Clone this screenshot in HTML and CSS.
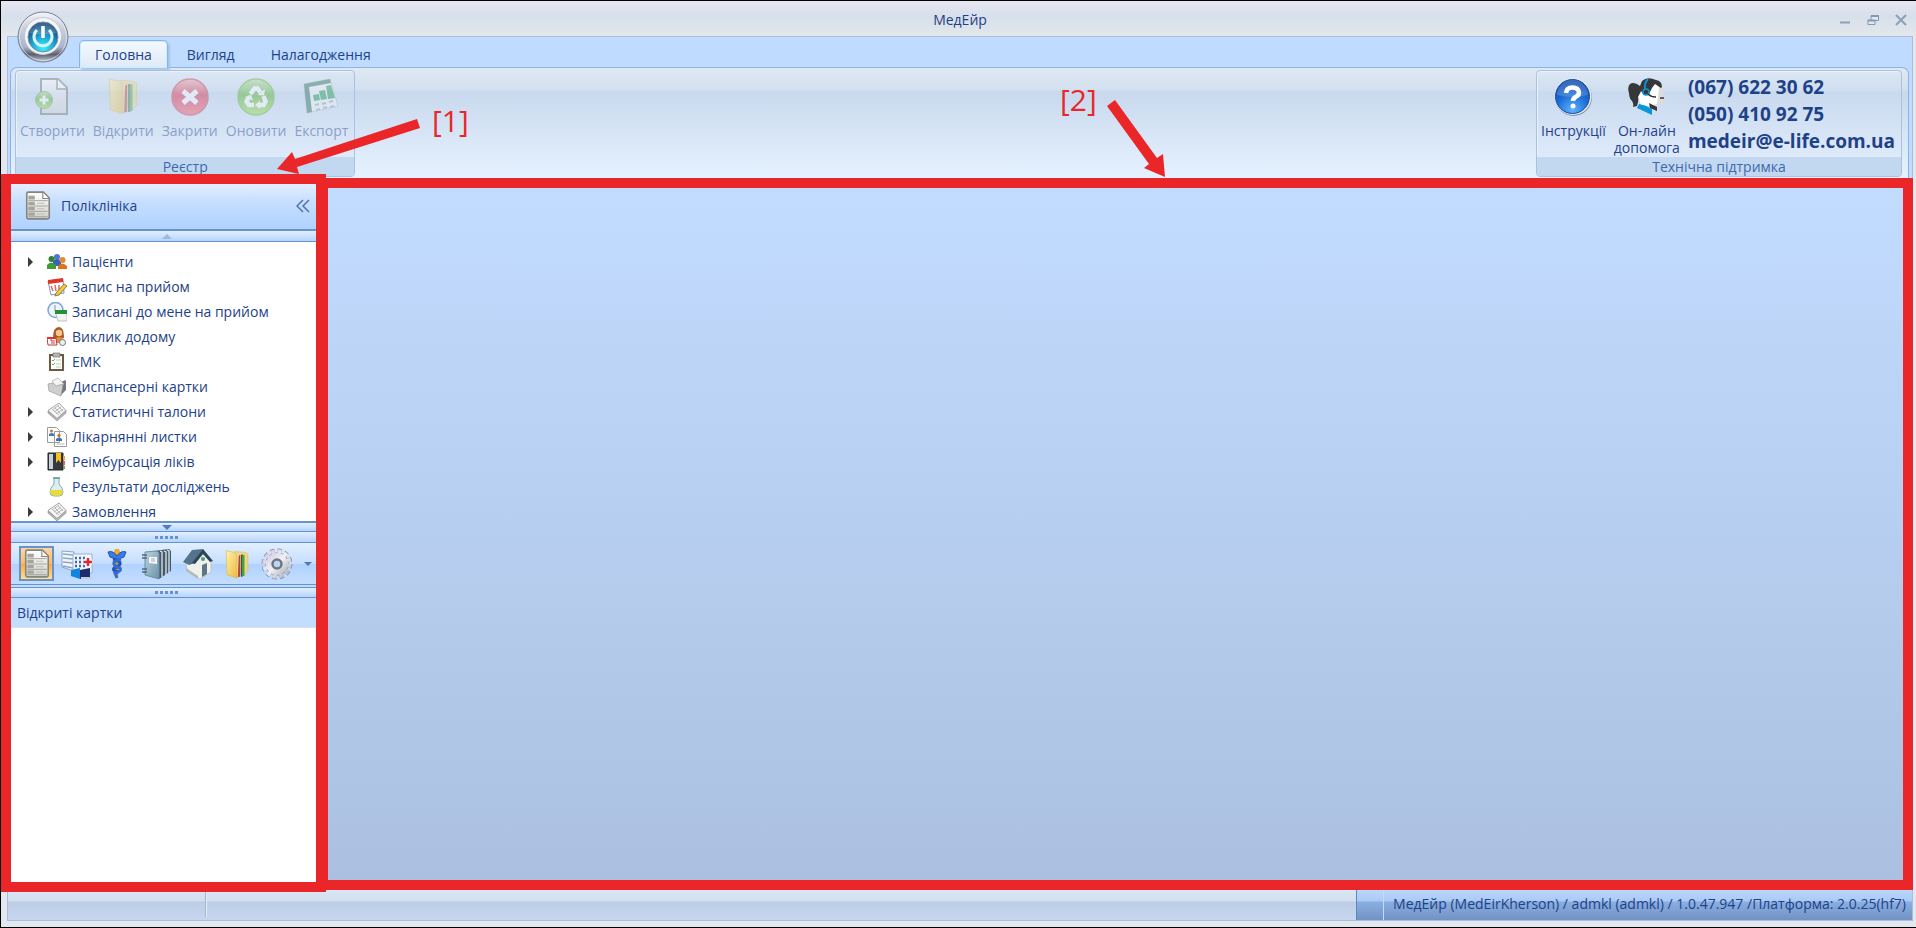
FILE: index.html
```html
<!DOCTYPE html>
<html lang="uk">
<head>
  <meta charset="UTF-8" />
  <meta name="viewport" content="width=device-width, initial-scale=1.0"/>
  <title>МедЕйр</title>
  <link rel="stylesheet" href="styles.css">
</head>
<body>
  <!-- shared gradients and icons used more than once -->
  <svg class="defs" width="0" height="0" aria-hidden="true">
    <defs>
      <linearGradient id="paper" x1="0" y1="0" x2="0" y2="1"><stop offset="0" stop-color="#fff"/><stop offset="1" stop-color="#cfcfcb"/></linearGradient>
      <linearGradient id="folder" x1="0" y1="0" x2="1" y2="1"><stop offset="0" stop-color="#fff3b0"/><stop offset="1" stop-color="#edb93c"/></linearGradient>
      <linearGradient id="steel" x1="0" y1="0" x2="0" y2="1"><stop offset="0" stop-color="#f4f6fa"/><stop offset=".3" stop-color="#ccd1de"/><stop offset=".7" stop-color="#a9b4cc"/><stop offset=".85" stop-color="#5b6070"/><stop offset="1" stop-color="#c9cedb"/></linearGradient>
      <linearGradient id="gear" x1="0" y1="0" x2="1" y2="1"><stop offset="0" stop-color="#d3c6e2"/><stop offset=".5" stop-color="#f1f1f6"/><stop offset="1" stop-color="#a9adb4"/></linearGradient>
      <linearGradient id="book" x1="0" y1="0" x2="1" y2="1"><stop offset="0" stop-color="#b9d3df"/><stop offset="1" stop-color="#6c93aa"/></linearGradient>
      <linearGradient id="red" x1="0" y1="0" x2="0" y2="1"><stop offset="0" stop-color="#f4a0ac"/><stop offset=".45" stop-color="#e0213c"/><stop offset="1" stop-color="#ff5368"/></linearGradient>
      <linearGradient id="green" x1="0" y1="0" x2="0" y2="1"><stop offset="0" stop-color="#b4dc9a"/><stop offset=".45" stop-color="#52b01e"/><stop offset="1" stop-color="#9be04a"/></linearGradient>
      <radialGradient id="blue" cx=".5" cy=".9" r=".8"><stop offset="0" stop-color="#5fb4ff"/><stop offset=".6" stop-color="#1b6cd6"/><stop offset="1" stop-color="#0e4dae"/></radialGradient>
      <radialGradient id="cyan" cx=".5" cy=".85" r=".75"><stop offset="0" stop-color="#35f4ff"/><stop offset=".5" stop-color="#1fa3d3"/><stop offset="1" stop-color="#0b4379"/></radialGradient>
    </defs>
    <symbol id="i-list" viewBox="0 0 24 28">
      <path d="M1.500 2.500q0-1.500 1.500-1.500h14l5.500 5.500v18q0 1.500-1.500 1.500H3q-1.500 0-1.500-1.500z" fill="url(#paper)" stroke="#85847d" stroke-width="1.500"/>
      <path d="M16.500 1.500v5.500h5.500" fill="#fff" stroke="#85847d"/>
      <path d="M3 4.500h6v3.500H3zM3 10h6v3H3zM3 15h6v3H3zM3 20h6v3H3z" fill="#a5a49d"/>
      <path d="M3 9h18M3 14h18M3 19h18M3 24h18" stroke="#9b9a93" stroke-width=".8"/>
      <path d="M11 11.500h7M11 16.500h7M11 21.500h7" stroke="#c0bfb8" stroke-width="1"/>
    </symbol>
    <symbol id="i-binder" viewBox="0 0 32 36">
      <path d="M13 3l13 1 3 2v21l-6 5z" fill="#f0d585" stroke="#d8b450" stroke-width=".6"/>
      <path d="M15 8l4-1v26l-4 1z" fill="#e6e0c8"/>
      <path d="M18 8l2-1v26l-3 1z" fill="#b9482c"/><path d="M21 7l2-.5v26l-2 1z" fill="#272f52"/><path d="M22 8l3-1v25l-3 1z" fill="#3fa63a"/>
      <path d="M3 2l9 2 4 4v27L4 31z" fill="url(#folder)" stroke="#e0b544" stroke-width=".7"/>
    </symbol>
    <symbol id="i-news" viewBox="0 0 20 20">
      <path d="M1 9v2l9 8 9-8V8l-9 8z" fill="#b9b9b9" stroke="#858585" stroke-width=".6"/>
      <path d="M1 8.500L12 1l7 7.500-9 8z" fill="#f7f7f7" stroke="#8d8d8d" stroke-width=".8"/>
      <path d="M5 8l7-5M7 10l7-5M9 12l7-5M8 6l6 6M6 8l6 5M11 4l5 5" stroke="#aaa" stroke-width=".8"/>
    </symbol>
  </svg>

  <div class="window">
    <header class="titlebar">
      <h1>МедЕйр</h1>
      <div class="window-buttons">
        <button type="button" aria-label="Згорнути"><svg width="12" height="12" viewBox="0 0 12 12"><path d="M1 8.500h10" stroke="#8e9fb8" stroke-width="2"/></svg></button>
        <button type="button" aria-label="Відновити"><svg width="12" height="12" viewBox="0 0 12 12"><path d="M4 1.500h7.500v5H4zM1 6.500h7v4H1z" fill="#e2e7ee" stroke="#8598b5"/><path d="M4 2h8M.5 6.500h8" stroke="#8598b5" stroke-width="2"/></svg></button>
        <button type="button" aria-label="Закрити вікно"><svg width="12" height="12" viewBox="0 0 12 12"><path d="M1 1l10 10M11 1L1 11" stroke="#8e9fb8" stroke-width="2"/></svg></button>
      </div>
    </header>

    <div class="frame">
      <button type="button" class="orb" aria-label="Меню">
        <svg width="52" height="52" viewBox="0 0 52 52">
          <circle cx="26" cy="26" r="25" fill="url(#steel)" stroke="#7b8190"/>
          <circle cx="26" cy="26" r="23.500" fill="none" stroke="#eef1f6" opacity=".6"/>
          <circle cx="26" cy="25" r="18.500" fill="#f3f5f8" stroke="#c3c8d2"/>
          <circle cx="26" cy="26" r="15" fill="url(#cyan)" stroke="#7d8c9b"/>
          <path d="M20 19a9 9 0 1 0 12 0" fill="none" stroke="#d9f3fa" stroke-width="3"/>
          <path d="M26 15v12" stroke="#fff" stroke-width="3.500"/>
          <path d="M12.500 22a14 14 0 0 1 27 0q-13 3-27 0z" fill="#fff" opacity=".2"/>
        </svg>
      </button>

      <nav class="tabs">
        <a href="#home" class="tab active">Головна</a>
        <a href="#view" class="tab">Вигляд</a>
        <a href="#setup" class="tab">Налагодження</a>
      </nav>

      <section class="ribbon" id="home">
        <div class="group">
          <div class="group-body">
            <button type="button" class="tool" disabled>
              <svg width="40" height="40" viewBox="0 0 40 40"><path d="M9 2h17l9 9v26H9z" fill="url(#paper)" stroke="#6f736f" stroke-width="2"/><path d="M25 2v10h10" fill="#fff" stroke="#6f736f" stroke-width="1.500"/><circle cx="12" cy="23" r="8.500" fill="url(#green)" stroke="#6da84c"/><path d="M12 18.500v9M7.500 23h9" stroke="#fff" stroke-width="3"/></svg>
              <span>Створити</span>
            </button>
            <button type="button" class="tool" disabled>
              <svg width="40" height="40" viewBox="-3 0 38 38"><use href="#i-binder" width="32" height="36"/></svg>
              <span>Відкрити</span>
            </button>
            <button type="button" class="tool" disabled>
              <svg width="40" height="40" viewBox="0 0 40 40"><circle cx="20" cy="20" r="18" fill="url(#red)" stroke="#c23a4b" stroke-width="1.500"/><path d="M13 14l14 12M27 14L13 26" stroke="#fff" stroke-width="5"/></svg>
              <span>Закрити</span>
            </button>
            <button type="button" class="tool" disabled>
              <svg width="40" height="40" viewBox="0 0 40 40"><circle cx="20" cy="20" r="18" fill="url(#green)" stroke="#69b039" stroke-width="1.500"/><g fill="none" stroke="#fff" stroke-width="4.500"><path d="M14.500 17l4-5.500h3l3 4"/><path d="M27.500 19l2 5.500-2 3.500h-5"/><path d="M18 28h-5l-2.500-3.500 2-4"/></g><path d="M21.500 18l6.500.5 1-6.500zM24 23.500V32l-5-4zM9 20l6-2.500 2 6z" fill="#fff"/></svg>
              <span>Оновити</span>
            </button>
            <button type="button" class="tool" disabled>
              <svg width="40" height="40" viewBox="0 0 40 40"><path d="M3 7l26-5 8 27-31 7z" fill="#f3f4f3" stroke="#b4bbc0"/><path d="M3 7l26-5 1 4-22 4 3 25-5 1z" fill="#276b51"/><path d="M12 18l6-1 1 6-6 1zM18 14l6-1 2 9-6 1zM25 9l5-1 4 13-7 1z" fill="#19974a"/><path d="M14 28l4-1M21 27l4-1M28 25l4-1M15 33l4-1M22 31l4-1M29 30l4-1" stroke="#9aa1a8" stroke-width="2"/></svg>
              <span>Експорт</span>
            </button>
          </div>
          <div class="group-title">Реєстр</div>
        </div>

        <div class="group support">
          <div class="group-body">
            <button type="button" class="tool">
              <svg width="40" height="40" viewBox="0 0 40 40"><circle cx="20.500" cy="20.500" r="18.500" fill="#8592a6"/><circle cx="20" cy="19.500" r="18.500" fill="#e3edf8"/><circle cx="19.500" cy="19.500" r="17" fill="url(#blue)" stroke="#1a4e9f"/><path d="M4 18a15.500 15 0 0 1 31 0q-15 4-31 0z" fill="#fff" opacity=".18"/><path d="M13 16q.5-5.500 6.500-5.500t6.500 5q0 3-3.500 4.500-2.500 1.500-2.500 4" fill="none" stroke="#fff" stroke-width="4.500"/><circle cx="20" cy="29" r="2.500" fill="#fff"/></svg>
              <span>Інструкції</span>
            </button>
            <button type="button" class="tool">
              <svg width="40" height="40" viewBox="0 0 40 40"><path d="M27 5l7 2 3 7-1 2 2 6-2 1v5l-6 1-3-6z" fill="#dcdcdc"/><path d="M22 7l8-1 2 6-1 8-1 7-3 1-12 3-4-12z" fill="#fff"/><path d="M13 9Q7 4 3 7q-3 3-1 9 0 5 3 8 2 3 1 6l4-1q2-6 1-9l3-6 3 4 5-1 3-6 3-4 6 4 1-1Q35 4 29 3 20-1 15 4z" fill="#363738"/><path d="M21 2q-4 4-3 11" fill="none" stroke="#0a96d8" stroke-width="1.800"/><circle cx="19" cy="15" r="3" fill="#363738" stroke="#0a96d8" stroke-width="1.500"/><path d="M21 17q3 3 8 3M33 21h4" fill="none" stroke="#333" stroke-width="1.500"/><path d="M22 26l8 4v4l-7-3z" fill="#363738"/><path d="M12 27q7 1 13 5v6L10 31z" fill="#0a96d8"/></svg>
              <span>Он-лайн<br>допомога</span>
            </button>
            <address class="contacts">
              <span>(067) 622 30 62</span>
              <span>(050) 410 92 75</span>
              <span>medeir@e-life.com.ua</span>
            </address>
          </div>
          <div class="group-title">Технічна підтримка</div>
        </div>
      </section>

      <div class="workspace">
        <aside class="sidebar">
          <div class="panel-head">
            <svg width="26" height="30"><use href="#i-list"/></svg>
            <h2>Поліклініка</h2>
            <button type="button" aria-label="Згорнути панель"><svg width="14" height="14" viewBox="0 0 14 14"><path d="M7 1L1 7l6 6M13 1L7 7l6 6" fill="none" stroke="#4e74ad" stroke-width="1.500"/></svg></button>
          </div>
          <button type="button" class="scroll up" aria-label="Вгору"><svg width="10" height="5"><path d="M0 5l5-5 5 5z" fill="#9db9df"/></svg></button>

          <ul class="tree">
            <li class="parent"><svg width="20" height="20" viewBox="0 0 20 20"><circle cx="10" cy="5" r="3" fill="#4d78cf"/><path d="M6 14V9q4-4 8 0v5z" fill="#3263bd"/><circle cx="4.500" cy="7" r="3" fill="#377f37"/><path d="M0 17v-4q4-5 9 0v4z" fill="#3d9c35"/><circle cx="15.500" cy="8" r="3" fill="#e08a32"/><path d="M11 17v-3q4-5 9 0v3z" fill="#e2711e"/></svg><a href="#p1">Пацієнти</a></li>
            <li><svg width="20" height="20" viewBox="0 0 20 20"><path d="M1 4l15-2 1 14-13 2z" fill="#fff" stroke="#7d96c2"/><path d="M1 3l15-2v4L1 7z" fill="#e23526"/><path d="M4 9l2 5M8 8l1 6M12 8v5" stroke="#d56b60" stroke-width="1.500"/><path d="M9 16l8-9 3 2-8 9-4 1z" fill="#f1c93f" stroke="#78652c" stroke-width=".8"/></svg><a href="#p2">Запис на прийом</a></li>
            <li><svg width="20" height="20" viewBox="0 0 20 20"><circle cx="8.500" cy="8" r="7.500" fill="#edf5fd" stroke="#77a9d5" stroke-width="1.500"/><path d="M8 3v6h4" fill="none" stroke="#8896a5"/><path d="M8 9h12v10H11z" fill="#f3f3f3" stroke="#aaa" stroke-width=".7"/><path d="M8 8h12v4H8z" fill="#259133"/></svg><a href="#p3">Записані до мене на прийом</a></li>
            <li><svg width="20" height="20" viewBox="0 0 20 20"><path d="M6 11q0-11 6-11 5 0 5 11z" fill="#aa5a24"/><circle cx="12" cy="6" r="3.200" fill="#f6c693"/><path d="M7 16q0-6 5-6t6 6z" fill="#d9923f"/><path d="M0 11h9l1 7H1z" fill="#fff" stroke="#ba3a31"/><path d="M0 10h9v2H0z" fill="#df3429"/><path d="M3 13h2v4M7 13v4" stroke="#d33" fill="none"/><circle cx="15.500" cy="15.500" r="3" fill="#eee" stroke="#777"/></svg><a href="#p4">Виклик додому</a></li>
            <li><svg width="20" height="20" viewBox="0 0 20 20"><path d="M3 3h13v15H3z" fill="#fff" stroke="#6b5943" stroke-width="2"/><path d="M6 1h7v4H6z" fill="#b6b6b2" stroke="#666" stroke-width=".6"/><path d="M5 8l1 1 2-2M5 12l1 1 2-2" stroke="#6da55a" fill="none"/><path d="M9 8h5M9 12h5M9 15h5" stroke="#b7d1ad"/></svg><a href="#p5">ЕМК</a></li>
            <li><svg width="20" height="20" viewBox="0 0 20 20"><path d="M8 9l10-6 1 1v9l-6 6z" fill="#777"/><path d="M5 4l6-3 6 6-7 4z" fill="#f4f4f4" stroke="#aaa" stroke-width=".7"/><path d="M1 7l5-1 3 3 7-2-2 12L2 14z" fill="#cfcfcf" stroke="#9b9b9b" stroke-width=".7"/></svg><a href="#p6">Диспансерні картки</a></li>
            <li class="parent"><svg width="20" height="20"><use href="#i-news"/></svg><a href="#p7">Статистичні талони</a></li>
            <li class="parent"><svg width="20" height="20" viewBox="0 0 20 20"><path d="M.5.500h9l3 3v12H.5zM7.500 4.500h9l3 3v12h-12z" fill="#fff" stroke="#9b9b97"/><circle cx="4.500" cy="4" r="1.500" fill="#c17b37"/><path d="M2 9V7q3-2 5 0v2z" fill="#4978b1"/><circle cx="12" cy="8.500" r="1.700" fill="#c17b37"/><path d="M9 14v-2q3-3 6 0v2z" fill="#3e72b0"/><path d="M9.500 17h8" stroke="#bbb"/></svg><a href="#p8">Лікарнянні листки</a></li>
            <li class="parent"><svg width="20" height="20" viewBox="0 0 20 20"><path d="M1 1h15v17H1z" fill="#35383e" stroke="#25282d"/><path d="M2 2h4v15H2z" fill="#c7d1dc"/><path d="M9 1h5v10l-2.500-3L9 11z" fill="#f2c221"/><path d="M16 4h2v4h-2z" fill="#e8aa44"/><path d="M16 9h2v4h-2z" fill="#d35f70"/><path d="M16 14h2v3h-2z" fill="#69a95a"/></svg><a href="#p9">Реімбурсація ліків</a></li>
            <li><svg width="20" height="20" viewBox="0 0 20 20"><path d="M7 1h5v6q4 4 4 8t-4 4H7q-4 0-4-4t4-8z" fill="#dceef0" stroke="#84acb5"/><path d="M3.500 13h12q1 5-3 5.500h-6Q2.500 18 3.500 13z" fill="#eadc36"/><path d="M6 1h7" stroke="#6994a1" stroke-width="1.500"/></svg><a href="#p10">Результати досліджень</a></li>
            <li class="parent"><svg width="20" height="20"><use href="#i-news"/></svg><a href="#p11">Замовлення</a></li>
          </ul>

          <button type="button" class="scroll down" aria-label="Вниз"><svg width="10" height="5"><path d="M0 0h10L5 5z" fill="#4f7dbd"/></svg></button>
          <div class="splitter"></div>

          <div class="modules">
            <button type="button" class="selected" aria-label="Поліклініка"><svg width="26" height="30"><use href="#i-list"/></svg></button>
            <button type="button" aria-label="Стаціонар"><svg width="32" height="32" viewBox="0 0 32 32"><path d="M1 3l12 1v19L1 19z" fill="#f2f5fa" stroke="#8fa3c1"/><path d="M2 6l10 1M2 10l10 1M2 14l10 1M2 18l10 2" stroke="#8fa5cb" stroke-width="1.500"/><path d="M12 6h19v19H12z" fill="#f1f5fc" stroke="#9cafce"/><path d="M14 10h12M14 14h12M14 18h12" stroke="#3f66b2" stroke-width="2.500" stroke-dasharray="2 2"/><circle cx="27" cy="14" r="4.500" fill="#fff"/><path d="M27 10v8M23 14h8" stroke="#df2937" stroke-width="2.500"/><path d="M10 22l9-2v11l-9-3z" fill="#1183e1"/><path d="M19 22l10-2v9l-10 2z" fill="#1c2d6e"/><path d="M20 30h11" stroke="#c5ccd9" stroke-width="2"/></svg></button>
            <button type="button" aria-label="Лікарі"><svg width="32" height="32" viewBox="0 0 32 32"><path d="M14 1h4l-1 29h-2z" fill="#d98e20"/><circle cx="16" cy="4" r="3" fill="#f1ae2b"/><path d="M7 4q5-2 9 4 4-6 9-4l-2 5-5 2h-4L9 9z" fill="#367bea" stroke="#2254b8"/><path d="M12 11q8 2 7 5t-6 4q-2 3 5 4" fill="none" stroke="#2054ba" stroke-width="3"/><path d="M20 11q-8 2-7 5t6 4q2 3-5 5l2 5" fill="none" stroke="#306bda" stroke-width="3"/></svg></button>
            <button type="button" aria-label="Журнали"><svg width="32" height="32" viewBox="0 0 32 32"><path d="M13 3l15-2 2 2v20L18 31z" fill="#45596a"/><path d="M19 3l2 1v25M23 3l2 1v23M26 2l2 1v22" stroke="#dfe8ec" stroke-width="1.300" fill="none"/><path d="M4 4l12-1 2 2v26L4 27z" fill="url(#book)" stroke="#6d8fa3"/><path d="M8 9h8v7l-8-1z" fill="#f4f8f8"/><path d="M10 11h4M10 13h4" stroke="#aaa"/><path d="M1 7h5M1 10h5M1 21h5M1 24h5" stroke="#59666f" stroke-width="1.500"/></svg></button>
            <button type="button" aria-label="Домашня"><svg width="32" height="32" viewBox="0 0 32 32"><path d="M5 15l9-3 9-6 7 8v10l-11 7-13-9z" fill="#f0f0ec" stroke="#b6b9bb" stroke-width=".7"/><path d="M5 20l12 8v3L5 23z" fill="#b4b9ba"/><path d="M2 14L11 2l11-1-8 14-6 2z" fill="#54748d"/><path d="M22 1l10 12-3 1-7-8-8 10-3-1z" fill="#2f4555"/><path d="M21 17l5-2v11l-5 3z" fill="#5c7686"/><circle cx="22" cy="11" r="2" fill="#3f9a87"/></svg></button>
            <button type="button" aria-label="Документи"><svg width="28" height="30"><use href="#i-binder"/></svg></button>
            <button type="button" aria-label="Налаштування"><svg width="32" height="32" viewBox="0 0 32 32"><circle cx="16" cy="16" r="12.500" fill="none" stroke="#858a95" stroke-width="6" stroke-dasharray="3.800 2.745"/><circle cx="16" cy="16" r="11.500" fill="#858a95"/><circle cx="16" cy="16" r="12.500" fill="none" stroke="url(#gear)" stroke-width="4.500" stroke-dasharray="3.800 2.745"/><circle cx="16" cy="16" r="11" fill="url(#gear)"/><circle cx="16" cy="16" r="4.500" fill="#bdd5f5" stroke="#6d7584" stroke-width="2.500"/></svg></button>
            <button type="button" class="more" aria-label="Більше"><svg width="8" height="4"><path d="M0 0h8L4 4z" fill="#4d77b5"/></svg></button>
          </div>
          <div class="splitter lower"></div>
          <h2 class="cards-head">Відкриті картки</h2>
          <div class="cards"></div>
        </aside>
        <main class="content"></main>
      </div>

      <footer class="statusbar">
        <span class="cell"></span>
        <span class="info">МедЕйр (MedEirKherson) / admkl (admkl) / 1.0.47.947 /Платформа: 2.0.25(hf7)</span>
      </footer>
    </div>
  </div>

  <div class="note note-1">
    <svg width="144" height="58" viewBox="0 0 144 58"><path d="M140 3l3 9-123 39 2 7-22-5 15-17 3 7z" fill="#ea2629"/></svg>
    <span>[1]</span>
  </div>
  <div class="note note-2">
    <span>[2]</span>
    <svg width="60" height="78" viewBox="0 0 60 78"><path d="M1 6l8-6 42 58 6-4 2 23-21-9 5-4z" fill="#ea2629"/></svg>
  </div>
</body>
</html>
```

FILE: styles.css
```css
* { box-sizing: border-box; }
body { margin: 0; font-family: "Open Sans", "Noto Sans", sans-serif; font-size: 14px; line-height: 20px; color: #1e4287; }
h1, h2 { margin: 0; font-size: inherit; font-weight: normal; }
button { margin: 0; padding: 0; border: 0; background: none; font: inherit; color: inherit; }
a { color: inherit; text-decoration: none; }
svg { display: block; flex: none; }
.defs { position: absolute; }

.window { display: flex; flex-direction: column; min-height: 100vh; padding: 0 3px 6px 6px; background: #e3e7ef; border: 1px solid #000; border-right: 0; }
.titlebar { position: relative; display: flex; align-items: center; justify-content: center; height: 35px; margin: 0 -3px 0 -6px; padding: 3px 0 0 3px; background: linear-gradient(#e6e6f3, #d7e0ea 45%, #e3e7ec); }
.window-buttons { position: absolute; right: 9px; top: 13px; display: flex; gap: 16px; }

.frame { position: relative; flex: 1; display: flex; flex-direction: column; border: 1px solid #adbdd3; background: #bfdbff; }
.orb { position: absolute; left: 9px; top: -26px; }
.tabs { display: flex; height: 30px; padding: 3px 0 0 71px; }
.tab { height: 27px; padding: 4px 16px 0; margin-right: 2px; border: 1px solid transparent; }
.tab.active { position: relative; height: 28px; padding: 4px 15px 0; border: 1px solid #8db2e3; border-bottom: 0; border-radius: 5px 5px 0 0; background: linear-gradient(#f3f8fe, #dfeaf6); box-shadow: 2px 2px 2px #a5c3e8, inset 0 0 0 1px #c5f0ff; }

/* ribbon */
.ribbon { display: flex; justify-content: space-between; height: 111px; margin: 0 3px 0 2px; padding: 2px 6px 1px 4px; border: 1px solid #8db2e3; border-bottom: 0; border-radius: 7px 7px 0 0; background: linear-gradient(#dfe9f4, #d3e0ef 22px, #c8d8ed 23px, #e6f2ff); }
.group { display: flex; flex-direction: column; border: 1px solid #a9c2df; border-radius: 4px; background: linear-gradient(#dce7f4, #cfdef0 20px, #c9d9ee 21px, #dfebfb 88px); box-shadow: inset 1px 1px #e9f1fa; overflow: hidden; }
.group-body { flex: 1; display: flex; gap: 8px; padding: 6px 6px 0 4px; }
.group-title { height: 19px; line-height: 20px; text-align: center; background: #c1d8f0; color: #3f69ab; }
.tool { display: flex; flex-direction: column; align-items: center; line-height: 17px; }
.tool svg { margin-bottom: 5px; }
.tool:disabled { opacity: .42; }
.contacts { display: flex; flex-direction: column; margin-top: -3px; font-style: normal; font-weight: bold; font-size: 19px; line-height: 27px; }

/* side panel */
.workspace { flex: 1; display: flex; }
.sidebar { position: relative; z-index: 1; display: flex; flex-direction: column; width: 318px; padding: 6px 4px 0 3px; }
.sidebar::after, .content::after { content: ""; position: absolute; border: 10px solid #ea2629; pointer-events: none; }
.sidebar::after { inset: -4px 0 -2px -7px; }
.panel-head { display: flex; align-items: center; gap: 10px; height: 47px; padding: 0 12px 2px 14px; border-bottom: 2px solid #6593cf; background: linear-gradient(#e3efff, #c6deff 40%, #afd2ff); }
.panel-head h2 { flex: 1; }
.scroll { display: flex; align-items: center; justify-content: center; height: 11px; background: linear-gradient(#e3efff, #b5d4fd); border-bottom: 1px solid #6593cf; }
.scroll.down { border-top: 2px solid #6593cf; }
.tree { margin: 0; padding: 7px 0 0; list-style: none; height: 279px; background: #fff; overflow: hidden; }
.tree li { display: flex; align-items: center; gap: 5px; height: 25px; padding-left: 36px; }
.tree .parent::before { content: ""; width: 0; margin: 0 9px 0 -19px; border: solid transparent; border-width: 5px 0 5px 5px; border-left-color: #3b3b3b; }
.splitter { display: flex; align-items: center; justify-content: center; height: 11px; border-bottom: 1px solid #6593cf; background: linear-gradient(#e3efff, #b5d4fd); }
.splitter::before { content: ""; width: 24px; height: 3px; background: repeating-linear-gradient(90deg, #6593cf 0 3px, transparent 3px 5px); }
.splitter.lower { margin-top: 2px; border-top: 1px solid #6593cf; }
.modules { display: flex; align-items: center; gap: 5px; height: 42px; padding: 0 6px 0 8px; border-bottom: 1px solid #6593cf; background: linear-gradient(#e3efff, #c5deff 50%, #b0d2ff 51%, #c5deff); }
.modules button { display: flex; align-items: center; justify-content: center; width: 35px; height: 35px; }
.modules .selected { border: 2px solid #6593cf; background: linear-gradient(#fcd5a4, #ffba62 50%, #ffa73b 51%, #ffe187); }
.modules .more { flex: 1; }
.cards-head { height: 30px; padding: 5px 6px; background: #c3ddff; border-bottom: 1px solid #d8e0ea; }
.cards { flex: 1; background: #fff; }

.content { position: relative; flex: 1; background: linear-gradient(#c2dcff, #abc0e0); }
.content::after { inset: 0 -1px 0 -8px; }

/* status bar */
.statusbar { display: flex; justify-content: space-between; height: 30px; background: linear-gradient(#d9e6f3, #d1dfef 11px, #bccde5 12px, #c5d6ee); }
.statusbar .cell { width: 198px; margin-bottom: 3px; border-right: 1px solid #9fb7d6; box-shadow: 1px 0 #e3edf8; }
.statusbar .info { padding: 4px 6px 0 36px; border-left: 1px solid #5c85c5; background: linear-gradient(90deg, transparent 26px, #c5dafa 26px 27px, transparent 27px), linear-gradient(#bdd6fa, #a9caf5 11px, #8baee0 12px, #7092c4); }

/* callouts */
.note { position: absolute; display: flex; color: #ea2629; font-size: 30px; line-height: 36px; z-index: 2; }
.note-1 { left: 277px; top: 116px; gap: 11px; }
.note-1 span { margin-top: -13px; }
.note-2 { left: 1060px; top: 100px; gap: 9px; }
.note-2 span { margin-top: -18px; }
```
